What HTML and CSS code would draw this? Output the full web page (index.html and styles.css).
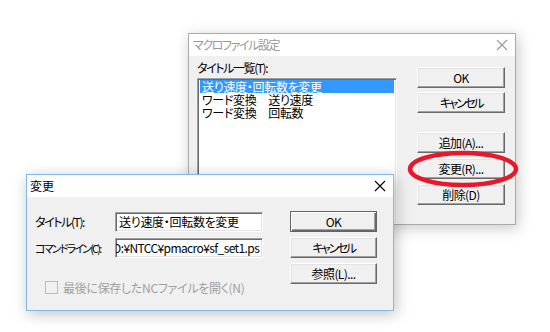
FILE: index.html
```html
<!DOCTYPE html>
<html lang="ja">
<head>
    <meta charset="UTF-8">
    <title>マクロファイル設定</title>
    <link rel="stylesheet" href="styles.css">
</head>
<body>
    <div class="desk">
        <!-- back window (inactive) -->
        <div class="dlg dlg-back">
            <div class="titlebar">
                <span class="title kana">マクロファイル設定</span>
                <svg class="close" width="12" height="12" viewBox="0 0 12 12"><path d="M1 1L11 11M11 1L1 11" stroke="#999" stroke-width="1.1"/></svg>
            </div>
            <div class="back-body">
                <div class="list-col">
                    <div class="lbl kana">タイトル一覧(T):</div>
                    <div class="listbox">
                        <div class="item sel">送り速度・回転数を変更</div>
                        <div class="item">ワード変換　送り速度</div>
                        <div class="item">ワード変換　回転数</div>
                    </div>
                </div>
                <div class="btn-col">
                    <button class="btn b-ok">OK</button>
                    <button class="btn b-cancel"><span class="kana2">キャンセル</span></button>
                    <button class="btn b-add">追加(A)...</button>
                    <button class="btn b-edit">変更(R)...</button>
                    <button class="btn b-del">削除(D)</button>
                </div>
            </div>
        </div>

        <!-- front window (active) -->
        <div class="dlg dlg-front">
            <div class="titlebar">
                <span class="title active">変更</span>
                <svg class="close" width="12" height="12" viewBox="0 0 12 12"><path d="M1 1L11 11M11 1L1 11" stroke="#000" stroke-width="1.1"/></svg>
            </div>
            <div class="front-body">
                <div class="lbl kana">タイトル(T):</div>
                <div class="field"><span>送り速度・回転数を変更</span></div>
                <button class="btn default">OK</button>

                <div class="lbl kana narrow">コマンドライン(C):</div>
                <div class="field"><span class="scrolled">D:¥NTCC¥pmacro¥sf_set1.ps</span></div>
                <button class="btn"><span class="kana2">キャンセル</span></button>

                <label class="check">
                    <span class="box"></span>
                    <span>最後に保存したNCファイルを開く(N)</span>
                </label>
                <button class="btn b-ref">参照(L)...</button>
            </div>
        </div>

        <svg class="mark" width="120" height="44" viewBox="0 0 120 44">
            <ellipse cx="60" cy="22" rx="53" ry="16" fill="none" stroke="#e8182a" stroke-width="4.5"/>
        </svg>
    </div>
</body>
</html>
```

FILE: styles.css
```css
body {
    margin: 0;
    background: #fff;
    font-family: "Noto Sans CJK JP", "Noto Sans", sans-serif;
    font-size: 12px;
    font-feature-settings: "palt";
    color: #000;
}
.desk {
    position: relative;
    width: 550px;
    height: 332px;
    overflow: hidden;
}
.kana {
    letter-spacing: -1.4px;
}
.kana.narrow {
    font-size: 11px;
    letter-spacing: -1.8px;
}
.kana2 {
    letter-spacing: -2.4px;
}
.dlg {
    position: absolute;
    background: #f0f0f0;
    display: flex;
    flex-direction: column;
}
.dlg-back {
    left: 188px;
    top: 33px;
    width: 326px;
    height: 190px;
    border: 1px solid #aaa;
    box-shadow: 2px 3px 14px rgba(0, 0, 0, 0.22);
}
.dlg-front {
    left: 26px;
    top: 174px;
    width: 366px;
    height: 135px;
    border: 1px solid #83b9e9;
    box-shadow: 2px 3px 14px rgba(0, 0, 0, 0.25);
}
.titlebar {
    height: 22px;
    background: #fff;
    display: flex;
    align-items: center;
    justify-content: space-between;
    padding: 0 7px 0 4px;
    flex-shrink: 0;
}
.dlg-front .titlebar {
    padding: 0 7px 0 3px;
}
.title {
    color: #999;
    font-size: 12px;
    line-height: 22px;
}
.title.active {
    color: #000;
}
.close {
    display: block;
}

/* back dialog */
.back-body {
    display: flex;
    padding: 4px 10px 0 8px;
    flex: 1;
    overflow: hidden;
}
.list-col {
    width: 200px;
    display: flex;
    flex-direction: column;
}
.lbl {
    line-height: 16px;
    white-space: nowrap;
}
.listbox {
    margin-top: 2px;
    flex: 1;
    background: #fff;
    border: 1px solid;
    border-color: #a0a0a0 #fff #fff #a0a0a0;
    box-shadow: inset 1px 1px #696969, inset -1px -1px #e3e3e3;
    padding: 1px 2px;
}
.item {
    line-height: 13px;
    height: 13px;
    padding-left: 2px;
    white-space: nowrap;
    letter-spacing: -0.3px;
}
.item.sel {
    background: #3399ff;
    color: #fff;
}
.btn-col {
    margin-left: 20px;
    width: 88px;
    display: flex;
    flex-direction: column;
    padding-top: 7px;
}
.btn {
    font: inherit;
    font-feature-settings: "palt";
    letter-spacing: -0.6px;
    color: #000;
    height: 21px;
    padding: 0;
    background: #f0f0f0;
    border: 1px solid;
    border-color: #fff #696969 #696969 #fff;
    box-shadow: inset -1px -1px #a0a0a0, inset 1px 1px #e3e3e3;
    line-height: 17px;
}
.b-cancel { margin-top: 4px; }
.b-add { margin-top: 19px; }
.b-edit { margin-top: 5px; }
.b-del { margin-top: 5px; }

/* front dialog */
.front-body {
    display: grid;
    grid-template-columns: 80px 148px 27px 87px;
    row-gap: 5px;
    padding: 14px 0 0 8px;
    align-items: center;
}
.front-body .btn {
    grid-column: 4;
    width: 87px;
}
.btn.default {
    border-color: #646464;
    box-shadow: inset 1px 1px #fff, inset -1px -1px #696969, inset -2px -2px #a0a0a0;
}
.field {
    height: 20px;
    background: #fff;
    border: 1px solid;
    border-color: #a0a0a0 #fff #fff #a0a0a0;
    box-shadow: inset 1px 1px #696969, inset -1px -1px #e3e3e3;
    overflow: hidden;
    white-space: nowrap;
    line-height: 18px;
    padding-left: 3px;
    box-sizing: border-box;
    letter-spacing: -0.3px;
}
.field .scrolled {
    display: inline-block;
    margin-left: -6px;
    letter-spacing: -0.6px;
}
.check {
    grid-column: 1 / 3;
    display: flex;
    align-items: center;
    color: #a0a0a0;
    margin-top: 16px;
    padding-left: 10px;
    letter-spacing: -0.3px;
    white-space: nowrap;
}
.box {
    width: 11px;
    height: 11px;
    border: 1px solid #bcbcbc;
    background: #f0f0f0;
    margin-right: 5px;
    flex-shrink: 0;
}
.b-ref {
    align-self: start;
}

.mark {
    position: absolute;
    left: 403px;
    top: 147px;
}
```
